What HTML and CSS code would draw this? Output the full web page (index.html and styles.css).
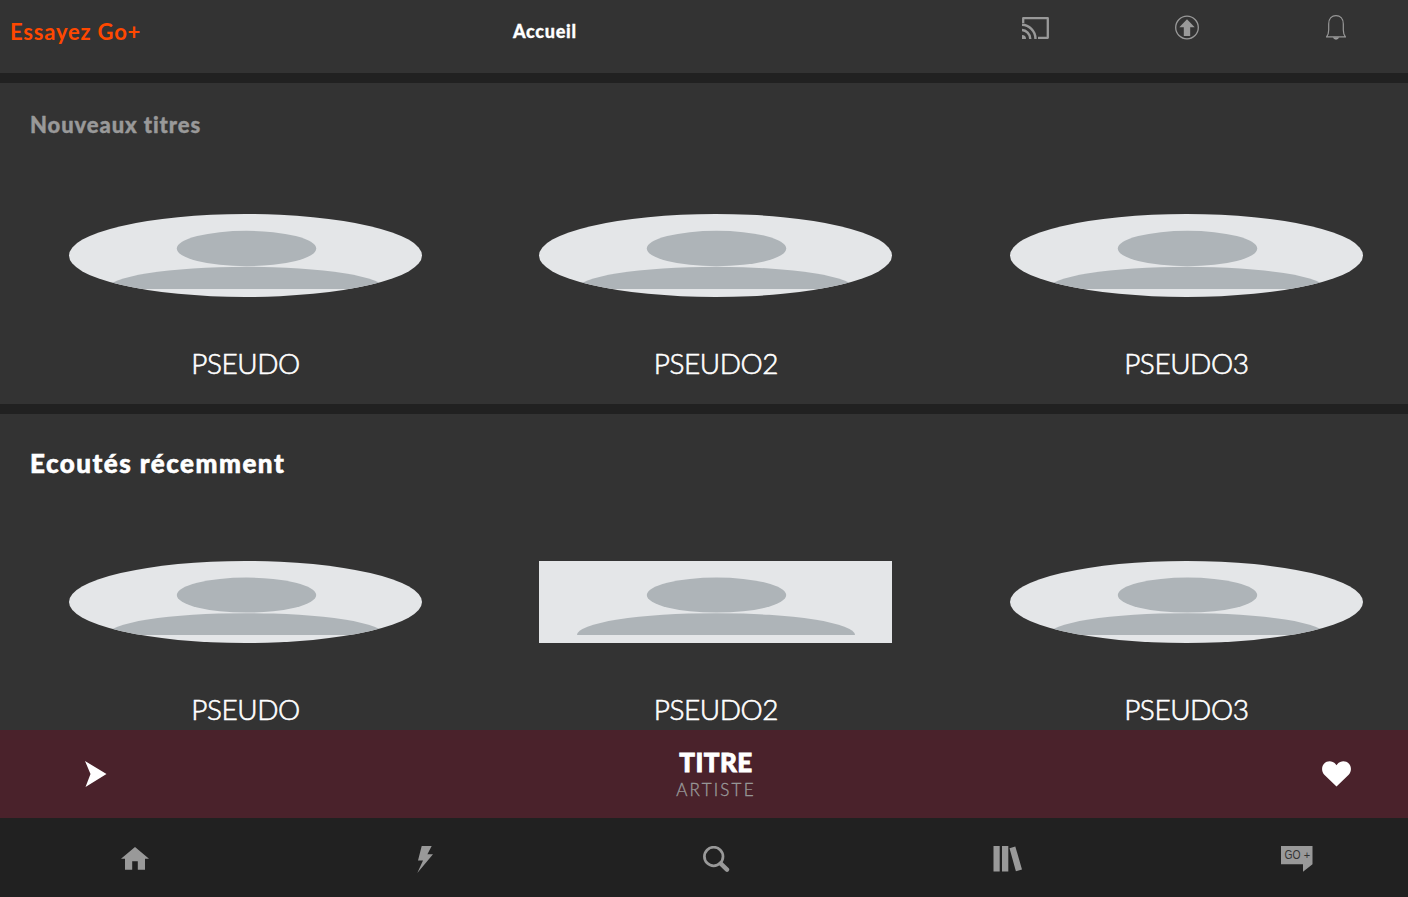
FILE: index.html
```html
<!DOCTYPE html>
<html lang="fr">
<head>
<meta charset="utf-8">
<title>Accueil</title>
<link rel="stylesheet" href="styles.css">
</head>
<body>
<svg class="defs" aria-hidden="true">
  <symbol id="avatar" viewBox="0 0 353 83" preserveAspectRatio="none">
    <rect width="353" height="83" fill="#e4e6e8"/>
    <ellipse cx="177.500" cy="34.500" rx="69.700" ry="17.700" fill="#aeb4b8"/>
    <path d="M38 75A139 22.200 0 0 1 316 75Z" fill="#aeb4b8"/>
  </symbol>
</svg>
<header class="top">
  <a class="go">Essayez Go+</a>
  <h1 class="page-title">Accueil</h1>
  <div class="actions">
    <svg class="icon cast" viewBox="0 0 28 23"><path d="M1.200 6V1.200H25.800V20.800H16" fill="none" stroke="#999" stroke-width="2.300" stroke-linejoin="round"/><path d="M0 7.800A14.200 14.200 0 0 1 14.200 22M0 13A9 9 0 0 1 9 22" transform="translate(-.7 0)" fill="none" stroke="#999" stroke-width="2.400"/><path d="M0 18A4 4 0 0 1 4 22H0Z" fill="#999"/></svg>
    <svg class="icon upload" viewBox="0 0 24 25"><circle cx="12" cy="12.500" r="11.300" fill="none" stroke="#999" stroke-width="1.300"/><path d="M12 4.300L19.700 12.300H15.200V21H8.800V12.300H4.300Z" fill="#999"/></svg>
    <svg class="icon bell" viewBox="0 0 20 25"><path d="M.6 21.800C2 20 2.700 18 2.700 15V9C2.700 3.500 6 .7 10 .7S17.300 3.500 17.300 9V15C17.300 18 18 20 19.400 21.800Z" fill="none" stroke="#999" stroke-width="1.200"/><path d="M6.800 22.300H13.200Q12.300 24.700 10 24.700T6.800 22.300Z" fill="#999"/></svg>
  </div>
</header>
<main>
  <section class="shelf">
    <h2 class="shelf-title muted">Nouveaux titres</h2>
    <div class="cards">
      <article class="card"><svg class="avatar round"><use href="#avatar"/></svg><p class="name">PSEUDO</p></article>
      <article class="card"><svg class="avatar round"><use href="#avatar"/></svg><p class="name">PSEUDO2</p></article>
      <article class="card"><svg class="avatar round"><use href="#avatar"/></svg><p class="name">PSEUDO3</p></article>
    </div>
  </section>
  <section class="shelf recent">
    <h2 class="shelf-title">Ecoutés récemment</h2>
    <div class="cards">
      <article class="card"><svg class="avatar round"><use href="#avatar"/></svg><p class="name">PSEUDO</p></article>
      <article class="card"><svg class="avatar"><use href="#avatar"/></svg><p class="name">PSEUDO2</p></article>
      <article class="card"><svg class="avatar round"><use href="#avatar"/></svg><p class="name">PSEUDO3</p></article>
    </div>
  </section>
</main>
<div class="player">
  <svg class="icon play" viewBox="0 0 22 26"><path d="M0 0L21.500 13L.5 26L5.500 13Z" fill="#fff"/></svg>
  <div class="track">
    <strong class="track-title">TITRE</strong>
    <span class="artist">ARTISTE</span>
  </div>
  <svg class="icon heart" viewBox="0 0 29 26"><path d="M14.500 25.500L2.300 13.800C-.7 10.600-.6 5.300 2.200 2.500C5.500-.8 11.500-.5 14.500 4.200C17.500-.5 23.500-.8 26.800 2.500C29.600 5.300 29.700 10.600 26.700 13.800Z" fill="#fff"/></svg>
</div>
<nav class="tabs">
  <svg class="icon home" viewBox="0 0 28 23"><path d="M14 0L28 11.700H24V22.800H16.800V14.200H11.200V22.800H4V11.700H0Z" fill="#999"/></svg>
  <svg class="icon bolt" viewBox="0 0 16 27"><path d="M4.700 0H14.700L10.400 8.300H16L.3 27L6 14.500H1Z" fill="#999"/></svg>
  <svg class="icon search" viewBox="0 0 27 27"><circle cx="10.700" cy="10.500" r="9.300" fill="none" stroke="#999" stroke-width="2.700"/><path d="M17.800 17.600L24 23.600" fill="none" stroke="#999" stroke-width="4.400" stroke-linecap="round"/></svg>
  <svg class="icon library" viewBox="0 0 29 26"><path d="M.5 0H6.700V25.500H.5ZM9 0H15.300V25.500H9ZM16.500 2.200L22.300 .4L29 23.500L22.900 25.300Z" fill="#999"/></svg>
  <svg class="icon goplus" viewBox="0 0 32 26"><path d="M0 0H31.500V18.300L22 25.800V18.300H0Z" fill="#999"/><text class="badge-text" x="3.500" y="13" textLength="16" lengthAdjust="spacingAndGlyphs">GO</text><text class="badge-text plus" x="22.700" y="12.700">+</text></svg>
</nav>
</body>
</html>
```
FILE: styles.css
```css
* { box-sizing: border-box; margin: 0; padding: 0; }
body {
  display: flex;
  flex-direction: column;
  height: 897px;
  overflow: hidden;
  background: #333;
  color: #fff;
  font-family: Lato, "Liberation Sans", sans-serif;
}
.defs { display: none; }
.icon { display: block; flex: none; }
.top {
  flex: none;
  display: grid;
  grid-template-columns: 503px 509px 1fr;
  height: 83px;
  padding: 15px 0 0 10px;
  border-bottom: 10px solid #212121;
}
.go { color: #ff4800; font-size: 22px; line-height: 34px; font-weight: 700; letter-spacing: .8px; }
.page-title { font-size: 18px; line-height: 32px; font-weight: 900; letter-spacing: .7px; -webkit-text-stroke: .3px currentColor; }
.actions { display: flex; align-items: flex-start; }
.cast { width: 28px; height: 23px; margin: 2px 125px 0 0; }
.upload { width: 24px; height: 25px; margin-right: 127px; }
.bell { width: 20px; height: 25px; }
main { flex: none; height: 647px; overflow: hidden; }
.shelf { height: 331px; padding-top: 26px; border-bottom: 10px solid #212121; }
.shelf-title {
  margin-left: 30px;
  height: 105px;
  font-size: 26px;
  line-height: 32px;
  font-weight: 900;
  letter-spacing: 1.5px;
  -webkit-text-stroke: .6px currentColor;
}
.shelf-title.muted { color: #999; font-size: 22px; letter-spacing: .9px; -webkit-text-stroke-width: .4px; }
.recent { height: 340px; padding-top: 33px; }
.recent .shelf-title { height: 114px; }
.recent .avatar { height: 82px; }
.cards { display: grid; grid-template-columns: repeat(3, 353px); column-gap: 117.4px; margin-left: 69px; }
.card { text-align: center; }
.avatar { display: block; width: 353px; height: 83px; }
.round { border-radius: 50%; }
.name {
  margin-top: 49px;
  font-size: 28px;
  line-height: 34px;
  font-weight: 300;
  letter-spacing: -.45px;
  -webkit-text-stroke: .6px currentColor;
}
.player {
  flex: none;
  display: flex;
  align-items: center;
  justify-content: space-between;
  height: 88px;
  padding: 0 57px 0 85px;
  background: #4a222b;
}
.play { width: 22px; height: 26px; }
.heart { width: 29px; height: 26px; }
.track { display: flex; flex-direction: column; align-items: center; padding: 1px 0 0 3px; }
.track-title { font-size: 26px; line-height: 30px; font-weight: 900; letter-spacing: .5px; -webkit-text-stroke: .8px currentColor; }
.artist { color: #999; font-size: 17px; line-height: 25px; font-weight: 300; letter-spacing: 2.2px; -webkit-text-stroke: .35px currentColor; }
.tabs {
  flex: none;
  display: flex;
  align-items: flex-start;
  height: 79px;
  padding: 28px 0 0 121px;
  background: #212121;
}
.home { width: 28px; height: 23px; margin: 1px 268px 0 0; }
.bolt { width: 16px; height: 27px; margin-right: 270px; }
.search { width: 27px; height: 27px; margin-right: 263px; }
.library { width: 29px; height: 26px; margin-right: 259px; }
.goplus { width: 32px; height: 26px; }
.badge-text { font-family: "Liberation Sans", sans-serif; font-size: 12px; fill: #333; }
.badge-text.plus { font-size: 11px; }
```
